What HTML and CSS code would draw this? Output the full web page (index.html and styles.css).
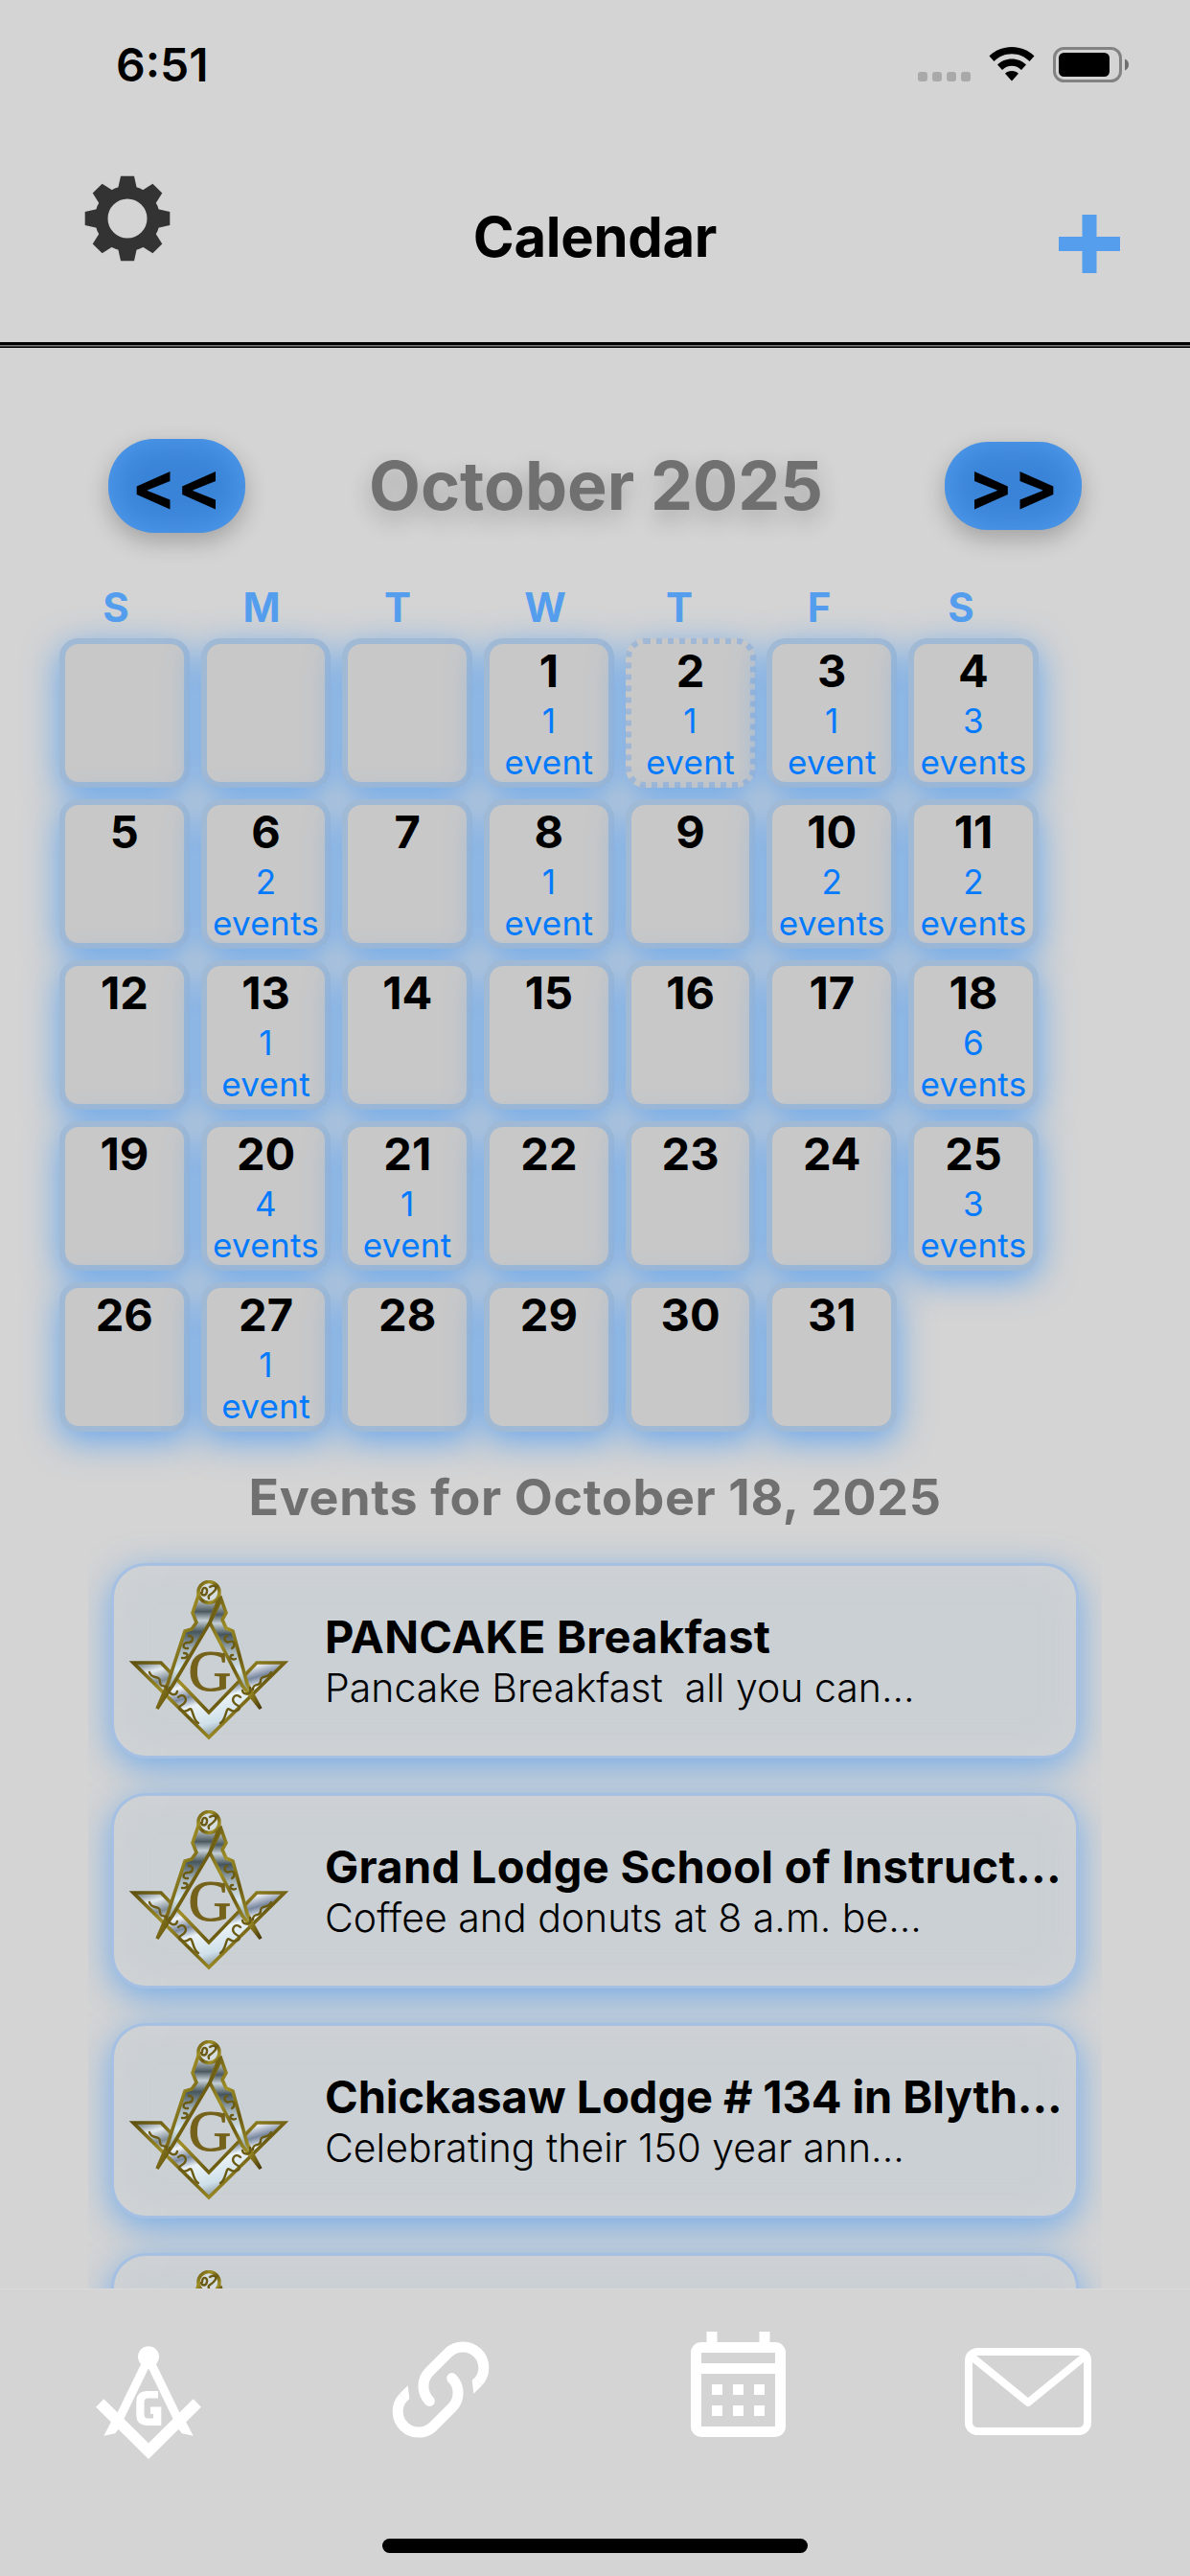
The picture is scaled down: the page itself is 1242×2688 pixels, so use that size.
FILE: index.html
```html
<!DOCTYPE html>
<html lang="en">
<head>
<meta charset="utf-8">
<title>Calendar</title>
<link rel="stylesheet" href="styles.css">
</head>
<body>
<svg class="defs" aria-hidden="true">
  <defs>
    <linearGradient id="steel" x1="0" y1="0" x2=".6" y2="1">
      <stop offset="0" stop-color="#5d6e74"/><stop offset=".14" stop-color="#e3eaee"/><stop offset=".26" stop-color="#7d8a94"/>
      <stop offset=".38" stop-color="#f2f5f8"/><stop offset=".5" stop-color="#7987a0"/><stop offset=".6" stop-color="#eaf2f6"/><stop offset=".82" stop-color="#cfe0ea"/><stop offset="1" stop-color="#6f808a"/>
    </linearGradient>
    <linearGradient id="leg" x1="0" y1="0" x2="0" y2="1">
      <stop offset="0" stop-color="#e6ebee"/><stop offset=".14" stop-color="#4c5a5f"/><stop offset=".22" stop-color="#c5d0d6"/><stop offset=".32" stop-color="#46565c"/>
      <stop offset=".48" stop-color="#a9b7bd"/><stop offset=".65" stop-color="#d6e6ee"/><stop offset="1" stop-color="#3f4a2a"/>
    </linearGradient>
    <linearGradient id="gold" x1="0" y1="0" x2="1" y2="1">
      <stop offset="0" stop-color="#5f500f"/><stop offset=".3" stop-color="#a09028"/><stop offset=".55" stop-color="#6b5b12"/><stop offset=".8" stop-color="#a09028"/><stop offset="1" stop-color="#4a3a0a"/>
    </linearGradient>
    <symbol id="emblem" viewBox="0 0 168 168">
      <g stroke="url(#gold)" stroke-width="3.600" stroke-linejoin="miter">
        <path fill="url(#steel)" d="M5 86H34L84 138L134 86H163L84 164Z"/>
        <path fill="url(#leg)" d="M97 20L102 34L98 41L102 50L109 53L124 108L138 134L119 110L85 44Z"/>
        <path fill="url(#leg)" d="M73 16L67 34L71 44L66 51L59 53L41 108L30 134L46 110L85 44L95 18Z"/>
        <circle cx="84" cy="12.500" r="11" fill="#d5dde0"/>
      </g>
      <g fill="none" stroke="#6a5a12" stroke-width="2.400" stroke-linecap="round">
        <path d="M77 12c0-6 6-5 5 0s-5 4-6 1M85 7c5-3 9 0 4 5s-6 3-5 7"/>
        <path d="M63 58c6 0 5 7-1 7s-6 7 0 6M58 76c6 0 4 6-2 5M103 58c-5 2-2 8 3 6s6 5 2 7M109 78c-5 0-2 6 3 4"/>
        <path d="M22 96c2 8 11 2 11 10s8 1 7 8M43 112c-3 7 7 10 8 4M52 122c6-6 12 4 4 8s2 9 7 5 3 10 10 14"/>
        <path d="M149 96c-3 7-11 2-11 9s-8 1-8 9M127 112c3 7-7 9-8 3M117 122c-6-6-12 4-4 8s-2 9-7 5-3 10-10 14"/>
      </g>
      <text x="85" y="115" text-anchor="middle" class="emblem-g">G</text>
    </symbol>
  </defs>
</svg>

<div class="statusbar">
  <span class="time">6:51</span>
  <div class="signals">
    <i class="dots"><b></b><b></b><b></b><b></b></i>
    <svg class="wifi" viewBox="0 0 48 36"><path d="M24 0C33 0 41.500 3.500 47.500 9.500L42.500 15C37.500 10 31 7.300 24 7.300S10.500 10 5.500 15L.5 9.500C6.500 3.500 15 0 24 0ZM24 12.500C30 12.500 35.200 14.700 39 18.600L34 24C31.300 21.300 27.800 19.800 24 19.800S16.700 21.300 14 24L9 18.600C12.800 14.700 18 12.500 24 12.500ZM24 25C27 25 29.300 26 31 27.700L24 35.500L17 27.700C18.700 26 21 25 24 25Z"/></svg>
    <svg class="battery" viewBox="0 0 80 37"><rect x="1.500" y="1.500" width="69" height="34" rx="10" fill="none" stroke="#828282" stroke-width="3"/><rect x="6" y="6" width="53" height="25" rx="5.500"/><path d="M75 12.500C77.500 13.500 79 15.800 79 18.500S77.500 23.500 75 24.500Z" fill="#6f6f6f"/></svg>
  </div>
</div>

<header class="header">
  <svg class="gear" viewBox="-45 -45 90 90">
    <circle r="27.250" fill="none" stroke="#333" stroke-width="13.500"/>
    <path d="M-9.700-32H9.700L7-44.300H-7Z"/>
    <path d="M-9.700-32H9.700L7-44.300H-7Z" transform="rotate(45)"/>
    <path d="M-9.700-32H9.700L7-44.300H-7Z" transform="rotate(90)"/>
    <path d="M-9.700-32H9.700L7-44.300H-7Z" transform="rotate(135)"/>
    <path d="M-9.700-32H9.700L7-44.300H-7Z" transform="rotate(180)"/>
    <path d="M-9.700-32H9.700L7-44.300H-7Z" transform="rotate(225)"/>
    <path d="M-9.700-32H9.700L7-44.300H-7Z" transform="rotate(270)"/>
    <path d="M-9.700-32H9.700L7-44.300H-7Z" transform="rotate(315)"/>
  </svg>
  <h1>Calendar</h1>
  <svg class="plus" viewBox="0 0 64 61"><path d="M24.500 0H39.500V23H64V38H39.500V61H24.500V38H0V23H24.500Z"/></svg>
</header>

<nav class="month">
  <button class="pill prev">&lt;&lt;</button>
  <h2>October 2025</h2>
  <button class="pill next">&gt;&gt;</button>
</nav>

<div class="weekdays"><span>S</span><span>M</span><span>T</span><span>W</span><span>T</span><span>F</span><span>S</span></div>

<div class="grid">
  <div class="day"></div><div class="day"></div><div class="day"></div>
  <div class="day"><b>1</b><span>1</span><span>event</span></div>
  <div class="day today"><svg viewBox="0 0 136 156"><rect x="3" y="3" width="130" height="150" rx="17"/></svg><b>2</b><span>1</span><span>event</span></div>
  <div class="day"><b>3</b><span>1</span><span>event</span></div>
  <div class="day"><b>4</b><span>3</span><span>events</span></div>
  <div class="day"><b>5</b></div>
  <div class="day"><b>6</b><span>2</span><span>events</span></div>
  <div class="day"><b>7</b></div>
  <div class="day"><b>8</b><span>1</span><span>event</span></div>
  <div class="day"><b>9</b></div>
  <div class="day"><b>10</b><span>2</span><span>events</span></div>
  <div class="day"><b>11</b><span>2</span><span>events</span></div>
  <div class="day"><b>12</b></div>
  <div class="day"><b>13</b><span>1</span><span>event</span></div>
  <div class="day"><b>14</b></div>
  <div class="day"><b>15</b></div>
  <div class="day"><b>16</b></div>
  <div class="day"><b>17</b></div>
  <div class="day"><b>18</b><span>6</span><span>events</span></div>
  <div class="day"><b>19</b></div>
  <div class="day"><b>20</b><span>4</span><span>events</span></div>
  <div class="day"><b>21</b><span>1</span><span>event</span></div>
  <div class="day"><b>22</b></div>
  <div class="day"><b>23</b></div>
  <div class="day"><b>24</b></div>
  <div class="day"><b>25</b><span>3</span><span>events</span></div>
  <div class="day"><b>26</b></div>
  <div class="day"><b>27</b><span>1</span><span>event</span></div>
  <div class="day"><b>28</b></div>
  <div class="day"><b>29</b></div>
  <div class="day"><b>30</b></div>
  <div class="day"><b>31</b></div>
</div>

<h3 class="events-title">Events for October 18, 2025</h3>

<main class="events">
  <article class="card"><svg class="emblem"><use href="#emblem"/></svg><div class="info"><h4>PANCAKE Breakfast</h4><p>Pancake Breakfast  all you can...</p></div></article>
  <article class="card"><svg class="emblem"><use href="#emblem"/></svg><div class="info"><h4>Grand Lodge School of Instruct...</h4><p>Coffee and donuts at 8 a.m. be...</p></div></article>
  <article class="card"><svg class="emblem"><use href="#emblem"/></svg><div class="info"><h4 class="tight">Chickasaw Lodge # 134 in Blyth...</h4><p>Celebrating their 150 year ann...</p></div></article>
  <article class="card"><svg class="emblem"><use href="#emblem"/></svg></article>
</main>

<footer class="tabbar">
  <div class="tabs">
    <svg class="tab-lodge" viewBox="0 0 110 120"><g fill="none" stroke="#fff"><path stroke-width="11.800" d="M4.200 60.500L55 110.600L105.800 60.500"/><path stroke-width="9" d="M55 14L20 86M55 14L90 86"/></g><circle cx="55" cy="12.300" r="11" fill="#fff"/><path fill="#fff" d="M16 80L8.300 94.700L20 92.300L26 85ZM94 80L101.700 94.700L90 92.300L84 85ZM65 48V55.500H54Q50.500 55.500 50.500 60V72Q50.500 76.500 54 76.500H60V72H57V64.500H68.300V84H53Q42.300 83 42.300 74V59Q42.300 48 54 48Z"/></svg>
    <svg class="tab-link" viewBox="0 0 102 103">
      <g id="half"><path d="M90.100 43.400A21.800 21.800 0 0 0 59.300 12.600L39.300 32.600A21.800 21.800 0 0 0 39.300 63.400" fill="none" stroke="#fff" stroke-width="11"/><circle cx="39.300" cy="63.400" r="5.500" fill="#fff"/><path d="M86 39.300L94 47.300L85.300 55.700L83.700 42Z" fill="#fff"/></g>
      <use href="#half" transform="rotate(180 51 51.500)"/>
    </svg>
    <svg class="tab-cal" viewBox="0 0 99 110"><path fill="#fff" fill-rule="evenodd" d="M16.500 0h11v11h44V0h11v11H88a11 11 0 0 1 11 11v77a11 11 0 0 1-11 11H11A11 11 0 0 1 0 99V22A11 11 0 0 1 11 11h5.500zM11 22v11h77V22zM11 44v55h77V44zM22 55h11v11H22zM44 55h11v11H44zM66 55h11v11H66zM22 77h11v11H22zM44 77h11v11H44zM66 77h11v11H66z"/></svg>
    <svg class="tab-mail" viewBox="0 0 132 91"><g fill="none" stroke="#fff" stroke-width="8" stroke-linejoin="round"><rect x="4" y="4" width="124" height="83" rx="9"/><path d="M7 9L66 57L125 9"/></g></svg>
  </div>
  <div class="home"></div>
</footer>
</body>
</html>
```
FILE: styles.css
```css
* { box-sizing: border-box; margin: 0; padding: 0; }
body { width: 1242px; height: 2688px; overflow: hidden; display: flex; flex-direction: column; background: #d4d4d4; font-family: Inter, "Liberation Sans", sans-serif; color: #000; }
svg { display: block; flex: none; }
.defs { position: absolute; width: 0; height: 0; }
.statusbar { height: 132px; flex: none; display: flex; justify-content: space-between; padding: 48px 63px 0 121px; }
.time { font-size: 48px; line-height: 40px; font-weight: 600; }
.signals { display: flex; }
.dots { display: flex; gap: 5px; margin: 27px 19px 0 0; height: 10px; }
.dots b { width: 10px; height: 10px; border-radius: 3px; background: #a9a9a9; }
.wifi { width: 48px; height: 36px; margin: 1px 19px 0 0; }
.battery { width: 80px; height: 37px; margin-top: 1px; }
.header { height: 231px; flex: none; display: grid; grid-template-columns: 1fr auto 1fr; align-items: start; padding: 0 73px 0 88px; background: linear-gradient(#000 3px, #777 3px 4px, #444 4px 5px, #000 5px) left bottom / 100% 6px no-repeat; }
.gear { width: 90px; height: 90px; margin-top: 51px; fill: #333; }
.header h1 { font-size: 58px; line-height: 60px; font-weight: 700; margin: 85px 15px 0 0; letter-spacing: -.3px; }
.plus { width: 64px; height: 61px; margin-top: 92px; fill: #559eee; justify-self: end; }
.month { height: 98px; flex: none; margin: 95px 113px 0; display: flex; align-items: center; justify-content: space-between; }
.pill { width: 143px; height: 98px; border: 0; border-radius: 48px; background: #3a84d8; box-shadow: 0 9px 24px rgba(0,0,0,.24), inset 0 0 36px rgba(95,170,250,.7); font: 700 70px/96px Inter, sans-serif; color: #000; }
.next { height: 92px; line-height: 90px; border-radius: 45px; }
.month h2 { font-size: 70px; line-height: 98px; font-weight: 700; color: #707070; text-shadow: 0 9px 24px rgba(0,0,0,.24); padding-left: 2px; }
.weekdays { height: 50px; flex: none; margin: 53px 0 0 45px; display: grid; grid-template-columns: 152px 152px 132px 176px 104px 188px 108px; text-align: center; font-size: 42px; line-height: 50px; font-weight: 700; color: #559eee; }
.grid { flex: none; margin: 7px 158px 0 62px; display: grid; grid-template-columns: repeat(7, 135.700px); column-gap: 12px; grid-auto-rows: 156px; row-gap: 12px; height: 828px; }
.day { position: relative; display: flex; flex-direction: column; align-items: center; border: 6px solid rgba(85,158,238,.35); border-radius: 20px; background: #c8c8c8; box-shadow: 0 9px 36px rgba(64,150,245,.74); }
.day b { font-size: 47px; line-height: 56px; font-weight: 700; margin-bottom: 3px; }
.day span { font-size: 35px; line-height: 43px; letter-spacing: .3px; color: #007aff; }
.today { border-color: transparent; }
.today svg { position: absolute; left: -6px; top: -6px; width: 136px; height: 156px; fill: none; stroke: #a0b8d6; stroke-width: 6; stroke-dasharray: 6 6; }
.events-title { flex: none; height: 72px; margin-top: 32px; text-align: center; font-size: 52px; line-height: 74px; font-weight: 700; color: #707070; letter-spacing: .65px; }
.events { flex: none; height: 790px; width: 1058px; margin-left: 92px; overflow: hidden; padding: 33px 24px 0; display: flex; flex-direction: column; gap: 36px; }
.card { flex: none; height: 204px; width: 1010px; display: flex; border: 3px solid #a5c0e2; border-radius: 36px; background: #cbd0d5; box-shadow: 0 9px 36px rgba(64,150,245,.65), inset 0 0 36px rgba(212,212,212,.8); padding: 15px; }
.emblem { width: 168px; height: 168px; }
.emblem-g { font: 62px "Liberation Serif", serif; fill: #75621a; stroke: #75621a; stroke-width: 1px; }
.info { margin-left: 37px; padding-top: 30px; white-space: pre; }
.info h4 { font-size: 47px; line-height: 57px; font-weight: 700; letter-spacing: .3px; }
.info .tight { letter-spacing: -.1px; }
.info p { font-size: 41px; line-height: 51px; font-weight: 300; }
.tabbar { flex: none; height: 300px; border-top: 1px solid #dadada; background: #d4d4d4; }
.tabs { height: 260px; display: flex; align-items: flex-start; }
.tab-lodge { width: 110px; height: 120px; margin: 58px 0 0 100px; }
.tab-link { width: 102px; height: 103px; margin: 53px 0 0 199px; }
.tab-cal { width: 99px; height: 110px; margin: 44px 0 0 210px; }
.tab-mail { width: 132px; height: 91px; margin: 61px 0 0 187px; }
.home { width: 444px; height: 15px; border-radius: 8px; background: #000; margin: 0 auto; }
```
